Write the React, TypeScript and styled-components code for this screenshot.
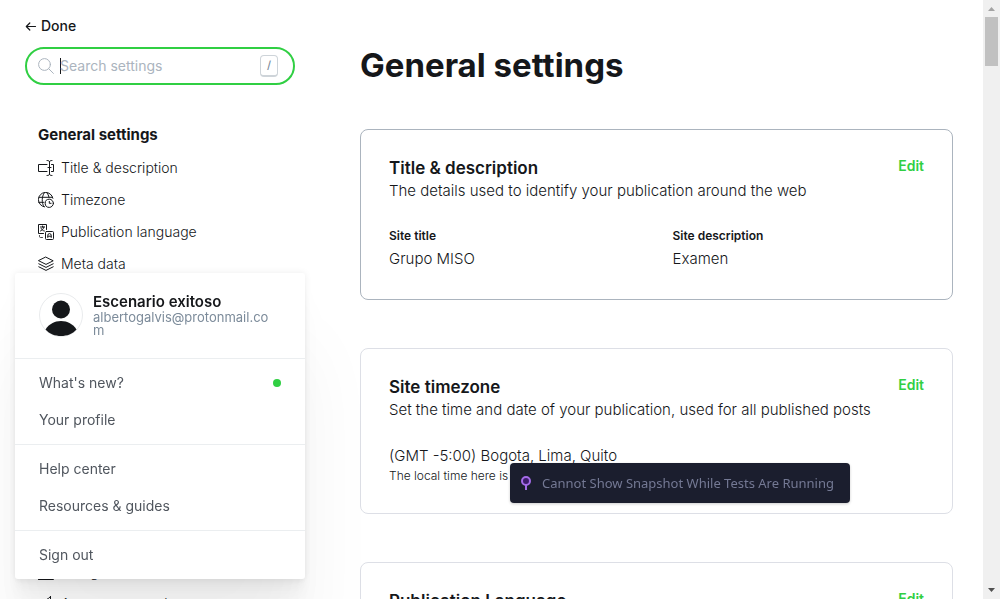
import React from "react";
import styled, { createGlobalStyle } from "styled-components";

const GlobalStyle = createGlobalStyle`
  *, *::before, *::after { box-sizing: border-box; }
  html, body { margin: 0; background: #fff; overflow: hidden; }
  body {
    font-family: Inter, "Liberation Sans", sans-serif;
    font-size: 14px;
    line-height: 20px;
    color: #15171a;
  }
  h1, h2, h3, p, ul, dl, dd { margin: 0; padding: 0; }
  ul { list-style: none; }
  a { color: inherit; text-decoration: none; }
  button { font: inherit; padding: 0; border: 0; background: none; color: inherit; cursor: pointer; }
  svg { flex: none; }
`;

const Page = styled.div`
  display: flex;
  height: 100vh;
  overflow: hidden;
`;

const Sidebar = styled.aside`
  flex: 0 0 270px;
  min-width: 0;
  margin: 16px 65px 0 25px;
`;

const DoneButton = styled.button`
  display: flex;
  align-items: center;
  gap: 4px;
  font-weight: 500;
  line-height: 20px;
`;

const SearchBox = styled.label`
  display: flex;
  align-items: center;
  gap: 6px;
  height: 38px;
  margin-top: 11px;
  padding: 0 15px 0 11px;
  border: 2px solid #30cf43;
  border-radius: 19px;
`;

const SearchInput = styled.input`
  flex: 1;
  min-width: 0;
  padding: 0;
  border: 0;
  outline: 0;
  background: none;
  font: inherit;
  color: #15171a;
  &::placeholder { color: #abb4be; opacity: 1; }
`;

const Caret = styled.span`
  width: 1px;
  height: 16px;
  margin-right: -7px;
  background: #15171a;
`;

const Key = styled.kbd`
  width: 18px;
  height: 22px;
  border: 1px solid #ced4d9;
  border-bottom-width: 2px;
  border-radius: 4px;
  font: 500 11px/18px Inter, sans-serif;
  text-align: center;
  color: #7c8b9a;
`;

const NavSection = styled.section`
  margin-top: 39px;
  padding-left: 13px;
  & + & { margin-top: 56px; }
`;

const NavHeading = styled.h2`
  margin-bottom: 6px;
  font-size: 15px;
  font-weight: 700;
  line-height: 22px;
`;

const NavLink = styled.a`
  display: flex;
  align-items: center;
  gap: 7px;
  height: 32px;
  font-weight: 300;
`;

const Main = styled.main`
  flex: 1;
  min-width: 0;
  margin-right: 30px;
  padding-top: 43px;
`;

const Title = styled.h1`
  margin-bottom: 42px;
  font-size: 33px;
  font-weight: 700;
  line-height: 44px;
`;

const Card = styled.section<{ $active?: boolean }>`
  margin-bottom: 48px;
  padding: 28px 28px 29px;
  border: 1px solid ${(p) => (p.$active ? "#abb4be" : "#dddfe6")};
  border-radius: 8px;
`;

const CardHead = styled.header`
  display: flex;
  justify-content: space-between;
  align-items: flex-start;
`;

const CardTitle = styled.h2`
  font-size: 17px;
  font-weight: 600;
  line-height: 21px;
`;

const CardText = styled.p`
  font-size: 15px;
  font-weight: 300;
  line-height: 24px;
`;

const EditButton = styled.button`
  font-size: 14px;
  font-weight: 600;
  line-height: 16px;
  color: #30cf43;
`;

const Fields = styled.dl`
  display: grid;
  grid-template-columns: 1fr 1fr;
  column-gap: 32px;
  margin-top: 23px;
`;

const FieldLabel = styled.dt`
  font-size: 12px;
  font-weight: 600;
  line-height: 20px;
`;

const FieldValue = styled.dd`
  padding-top: 2px;
  font-size: 15px;
  font-weight: 300;
  line-height: 22px;
`;

const Timezone = styled.div`
  margin-top: 23px;
`;

const TimezoneName = styled.p`
  font-size: 15px;
  font-weight: 300;
  line-height: 22px;
`;

const TimezoneNote = styled.p`
  font-size: 12px;
  font-weight: 300;
  line-height: 17px;
`;

const Scrollbar = styled.div`
  flex: 0 0 17px;
  display: flex;
  flex-direction: column;
  align-items: center;
  background: #f0f0f0;
`;

const Thumb = styled.div`
  width: 13px;
  height: 49px;
  margin-bottom: auto;
  background: #c1c1c1;
`;

const UserMenu = styled.nav`
  position: fixed;
  left: 15px;
  bottom: 20px;
  width: 290px;
  background: #fff;
  border-radius: 3px;
  color: #50565e;
  box-shadow:
    0 0 7px rgba(0, 0, 0, 0.08),
    0 5px 5px rgba(0, 0, 0, 0.02),
    0 10px 10px rgba(0, 0, 0, 0.025),
    0 17px 18px rgba(0, 0, 0, 0.028),
    0 32px 33px rgba(0, 0, 0, 0.03),
    0 76px 80px rgba(0, 0, 0, 0.05);
`;

const UserHead = styled.div`
  display: flex;
  gap: 10px;
  height: 85px;
  padding: 20px 32px 0 24px;
`;

const UserName = styled.p`
  font-size: 15px;
  font-weight: 600;
  line-height: 18px;
  color: #15171a;
`;

const UserEmail = styled.p`
  font-size: 13px;
  line-height: 13px;
  overflow-wrap: anywhere;
  color: #7c8b9a;
`;

const MenuGroup = styled.ul`
  padding: 5px 0 6px;
  border-top: 1px solid #ebeef0;
`;

const MenuLink = styled.a`
  display: flex;
  align-items: center;
  justify-content: space-between;
  height: 37px;
  padding: 0 24px;
`;

const Dot = styled.span`
  width: 8px;
  height: 8px;
  border-radius: 50%;
  background: #30cf43;
`;

const Toast = styled.div`
  position: fixed;
  left: 510px;
  bottom: 96px;
  display: flex;
  align-items: center;
  gap: 10px;
  width: 340px;
  height: 40px;
  padding: 0 10px;
  border-radius: 4px;
  background: #1b1e2e;
  color: #747994;
  font: 13px/20px "Noto Sans", "Open Sans", sans-serif;
  white-space: nowrap;
  box-shadow: 0 1px 3px rgba(0, 0, 0, 0.2);
`;

const Icon = ({ children }: { children: React.ReactNode }) => (
  <svg width="16" height="16" viewBox="0 0 16 16" fill="none" stroke="currentColor" strokeLinecap="round" strokeLinejoin="round" aria-hidden="true">
    {children}
  </svg>
);

const icons = {
  title: (
    <Icon>
      <path d="M9 4.500H.5v7H9M13.500 4.500h2v7h-2M11.500 2v12M9 .5c1.500 0 2.500.4 2.500 1.500 0-1.100 1-1.500 2.500-1.500M9 15.500c1.500 0 2.500-.4 2.500-1.500 0 1.100 1 1.500 2.500 1.500M10 7.500h3" />
    </Icon>
  ),
  timezone: (
    <Icon>
      <path d="M14.900 6.300A7.300 7.300 0 1 0 6.500 14.900M1 5.300h13.300M.7 10.300H6M6.300.8C3.500 5 3.600 10.500 5.900 14.700M9 .8c1 1.300 1.600 2.800 2 4.400" />
      <circle cx="11.300" cy="11.300" r="4.100" />
      <path d="M11.300 9.400v1.900h1.800" />
    </Icon>
  ),
  language: (
    <Icon>
      <path d="M5.500 9.500h-5v-9h8v5M2.400 3h4.200M4.500 2v1M5.900 3c-.4 2-1.600 3.400-3.400 4M3.200 4.500C3.800 6 5 6.800 6.400 7" />
      <rect x="7.500" y="7.500" width="8" height="8" rx="1" />
      <path d="M9.800 13.500v-2.200a1.700 1.700 0 0 1 3.400 0v2.200M9.800 12.200h3.400" />
      <path d="M1.500 11.500v1c0 .6.400 1 1 1h2" strokeWidth="0.800" />
    </Icon>
  ),
  layers: (
    <Icon>
      <path d="m8 1.200 7.200 3.600L8 8.400.8 4.800zM.8 7.800 8 11.400l7.200-3.600M.8 10.800 8 14.400l7.200-3.600" />
    </Icon>
  ),
  window: (
    <Icon>
      <path d="M.5 1.500h15v14H.5zM.5 5h15" />
    </Icon>
  ),
  megaphone: (
    <Icon>
      <path d="M12.500.5v11C10 9.500 7 8.500 4 8.500a2 2 0 0 1 0-4c3 0 6-1 8.500-4zM4 8.500l1.500 5" />
    </Icon>
  ),
};

const sections = [
  {
    heading: "General settings",
    items: [
      ["Title & description", icons.title],
      ["Timezone", icons.timezone],
      ["Publication language", icons.language],
      ["Meta data", icons.layers],
      ["Twitter card", icons.window],
      ["Facebook card", icons.window],
      ["Social accounts", icons.layers],
      ["Make this site private", icons.window],
      ["Staff", icons.window],
    ],
  },
  {
    heading: "Site",
    items: [
      ["Design", icons.window],
      ["Navigation", icons.window],
      ["Announcement bar", icons.megaphone],
    ],
  },
] as { heading: string; items: [string, React.ReactNode][] }[];

const menuGroups = [["What's new?", "Your profile"], ["Help center", "Resources & guides"], ["Sign out"]];

function SettingCard(props: { title: string; text: string; active?: boolean; children?: React.ReactNode }) {
  return (
    <Card $active={props.active}>
      <CardHead>
        <div>
          <CardTitle>{props.title}</CardTitle>
          <CardText>{props.text}</CardText>
        </div>
        <EditButton type="button">Edit</EditButton>
      </CardHead>
      {props.children}
    </Card>
  );
}

export default function App() {
  return (
    <>
      <GlobalStyle />
      <Page>
        <Sidebar>
          <DoneButton type="button">
            <svg width="12" height="12" viewBox="0 0 12 12" fill="none" stroke="currentColor" strokeWidth="1.200" strokeLinecap="round" strokeLinejoin="round" aria-hidden="true">
              <path d="M10.500 6.500H1.300M4.800 3 1.300 6.500 4.800 10" />
            </svg>
            Done
          </DoneButton>
          <SearchBox>
            <svg width="16" height="16" viewBox="0 0 16 16" fill="none" stroke="#abb4be" strokeLinecap="round" aria-hidden="true">
              <circle cx="6.500" cy="6.500" r="5.900" />
              <path d="m10.800 10.800 4.600 4.600" />
            </svg>
            <Caret />
            <SearchInput type="text" placeholder="Search settings" aria-label="Search settings" />
            <Key>/</Key>
          </SearchBox>
          {sections.map((s) => (
            <NavSection key={s.heading}>
              <NavHeading>{s.heading}</NavHeading>
              <ul>
                {s.items.map(([label, icon]) => (
                  <li key={label}>
                    <NavLink href="#">
                      {icon}
                      {label}
                    </NavLink>
                  </li>
                ))}
              </ul>
            </NavSection>
          ))}
        </Sidebar>
        <Main>
          <Title>General settings</Title>
          <SettingCard active title="Title & description" text="The details used to identify your publication around the web">
            <Fields>
              <div>
                <FieldLabel>Site title</FieldLabel>
                <FieldValue>Grupo MISO</FieldValue>
              </div>
              <div>
                <FieldLabel>Site description</FieldLabel>
                <FieldValue>Examen</FieldValue>
              </div>
            </Fields>
          </SettingCard>
          <SettingCard title="Site timezone" text="Set the time and date of your publication, used for all published posts">
            <Timezone>
              <TimezoneName>(GMT -5:00) Bogota, Lima, Quito</TimezoneName>
              <TimezoneNote>The local time here is</TimezoneNote>
            </Timezone>
          </SettingCard>
          <SettingCard title="Publication Language" text="Set the language/locale which is used on your site" />
        </Main>
        <Scrollbar aria-hidden="true">
          <svg width="17" height="17" viewBox="0 0 17 17" fill="#a3a3a3">
            <path d="M5 11h7L8.500 7z" />
          </svg>
          <Thumb />
          <svg width="17" height="17" viewBox="0 0 17 17" fill="#505050">
            <path d="M5 6h7l-3.500 4z" />
          </svg>
        </Scrollbar>
      </Page>
      <UserMenu aria-label="Account">
        <UserHead>
          <svg width="44" height="44" viewBox="0 0 44 44" aria-hidden="true">
            <circle cx="22" cy="22" r="21.500" fill="#fff" stroke="#e9ebed" />
            <circle cx="22" cy="16.500" r="9" fill="#15171a" />
            <path d="M6.500 36.500C10 31 15.500 28 22 28s12 3 15.500 8.500C33.500 41 28 43 22 43S10.500 41 6.500 36.500z" fill="#15171a" />
          </svg>
          <div>
            <UserName>Escenario exitoso</UserName>
            <UserEmail>albertogalvis@protonmail.com</UserEmail>
          </div>
        </UserHead>
        {menuGroups.map((group) => (
          <MenuGroup key={group[0]}>
            {group.map((label) => (
              <li key={label}>
                <MenuLink href="#">
                  {label}
                  {label === "What's new?" && <Dot />}
                </MenuLink>
              </li>
            ))}
          </MenuGroup>
        ))}
      </UserMenu>
      <Toast role="status">
        <svg width="12" height="16" viewBox="0 0 12 16" fill="none" stroke="#a46be8" strokeWidth="2" aria-hidden="true">
          <circle cx="6" cy="6" r="4" fill="#3d1c6b" />
          <path d="M6 10v5" />
        </svg>
        Cannot Show Snapshot While Tests Are Running
      </Toast>
    </>
  );
}
